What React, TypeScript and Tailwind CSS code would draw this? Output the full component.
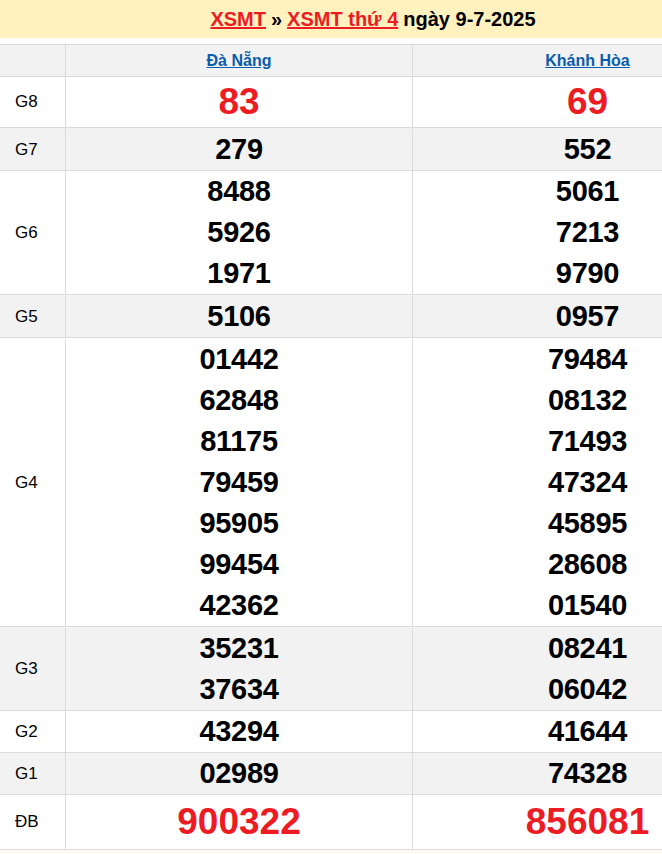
import React from "react";

type Row = { label: string; a: string[]; b: string[]; big?: boolean; h: string; bg: string; pad?: boolean };

const rows: Row[] = [
  { label: "G8", a: ["83"], b: ["69"], big: true, h: "leading-[50px]", bg: "bg-white" },
  { label: "G7", a: ["279"], b: ["552"], h: "leading-[41px]", bg: "bg-[#f2f2f2]", pad: true },
  { label: "G6", a: ["8488", "5926", "1971"], b: ["5061", "7213", "9790"], h: "leading-[41px]", bg: "bg-white" },
  { label: "G5", a: ["5106"], b: ["0957"], h: "leading-[41px]", bg: "bg-[#f2f2f2]", pad: true },
  {
    label: "G4",
    a: ["01442", "62848", "81175", "79459", "95905", "99454", "42362"],
    b: ["79484", "08132", "71493", "47324", "45895", "28608", "01540"],
    h: "leading-[41px]",
    bg: "bg-white",
    pad: true,
  },
  { label: "G3", a: ["35231", "37634"], b: ["08241", "06042"], h: "leading-[41px]", bg: "bg-[#f2f2f2]", pad: true },
  { label: "G2", a: ["43294"], b: ["41644"], h: "leading-[41px]", bg: "bg-white" },
  { label: "G1", a: ["02989"], b: ["74328"], h: "leading-[41px]", bg: "bg-[#f2f2f2]" },
  { label: "ĐB", a: ["900322"], b: ["856081"], big: true, h: "leading-[54px]", bg: "bg-white" },
];

function Nums({ list, big, h }: { list: string[]; big?: boolean; h: string }) {
  return (
    <div className="flex flex-col items-center">
      {list.map((n, i) => (
        <div
          key={i}
          className={
            big
              ? `${h} text-[37px] font-bold text-[#ed1c24]`
              : `${h} text-[29px] font-bold text-black tracking-[-0.3px]`
          }
        >
          {n}
        </div>
      ))}
    </div>
  );
}

export default function App() {
  return (
    <div
      className="w-[762px] bg-[#fdfaf2] min-h-[854px]"
      style={{ fontFamily: '"Liberation Sans", Arial, sans-serif' }}
    >
      <div className="h-[38px] bg-[#fff2bf] flex items-center justify-center pr-[16px] text-[20px] font-bold leading-none">
        <a className="text-[#ed1c24] underline" href="#">XSMT</a>
        <span className="text-black mx-[5px]">»</span>
        <a className="text-[#ed1c24] underline" href="#">XSMT thứ 4</a>
        <span className="text-black ml-[5px]">ngày 9-7-2025</span>
      </div>
      <div className="h-[6px] bg-white" />
      <div className="border-t border-[#dadada]">
        <div className="flex bg-[#f2f2f2] border-b border-[#dadada] h-[32px]">
          <div className="w-[66px] border-r border-[#dadada]" />
          <div className="w-[347px] border-r border-[#dadada] flex items-center justify-center">
            <a href="#" className="text-[16px] font-bold text-[#0a5cad] underline">Đà Nẵng</a>
          </div>
          <div className="w-[349px] flex items-center justify-center">
            <a href="#" className="text-[16px] font-bold text-[#0a5cad] underline">Khánh Hòa</a>
          </div>
        </div>
        {rows.map((r) => (
          <div key={r.label} className={`flex ${r.bg} border-b border-[#dadada] ${r.pad ? "pt-[1px]" : ""}`}>
            <div className="w-[66px] border-r border-[#dadada] flex items-center pl-[15px] text-[17px] text-black">
              {r.label}
            </div>
            <div className="w-[347px] border-r border-[#dadada]">
              <Nums list={r.a} big={r.big} h={r.h} />
            </div>
            <div className="w-[349px]">
              <Nums list={r.b} big={r.big} h={r.h} />
            </div>
          </div>
        ))}
      </div>
    </div>
  );
}
